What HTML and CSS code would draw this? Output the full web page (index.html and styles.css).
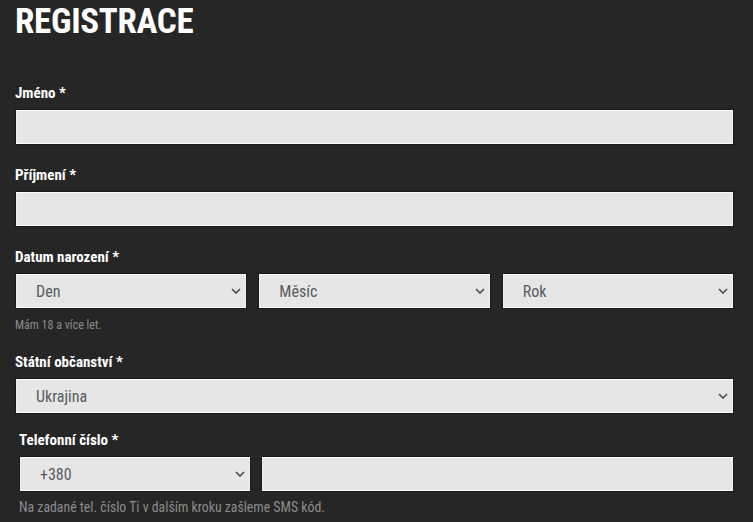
FILE: index.html
```html
<!DOCTYPE html>
<html lang="cs">
<head>
<meta charset="utf-8">
<title>Registrace</title>
<link rel="stylesheet" href="styles.css">
</head>
<body>
<div class="page">
  <h1 class="title">REGISTRACE</h1>

  <div class="field field-first">
    <label class="label">Jméno *</label>
    <div class="input"></div>
  </div>

  <div class="field">
    <label class="label">Příjmení *</label>
    <div class="input"></div>
  </div>

  <div class="field">
    <label class="label">Datum narození *</label>
    <div class="row3">
      <div class="select"><span>Den</span><svg class="chev" viewBox="0 0 10 6" width="10" height="6"><path d="M1 1 L5 5 L9 1" fill="none" stroke="#4a4a4a" stroke-width="1.6"/></svg></div>
      <div class="select"><span>Měsíc</span><svg class="chev" viewBox="0 0 10 6" width="10" height="6"><path d="M1 1 L5 5 L9 1" fill="none" stroke="#4a4a4a" stroke-width="1.6"/></svg></div>
      <div class="select"><span>Rok</span><svg class="chev" viewBox="0 0 10 6" width="10" height="6"><path d="M1 1 L5 5 L9 1" fill="none" stroke="#4a4a4a" stroke-width="1.6"/></svg></div>
    </div>
    <p class="hint">Mám 18 a více let.</p>
  </div>

  <div class="field">
    <label class="label">Státní občanství *</label>
    <div class="select"><span>Ukrajina</span><svg class="chev" viewBox="0 0 10 6" width="10" height="6"><path d="M1 1 L5 5 L9 1" fill="none" stroke="#4a4a4a" stroke-width="1.6"/></svg></div>
  </div>

  <div class="field field-phone">
    <label class="label">Telefonní číslo *</label>
    <div class="phone-row">
      <div class="select"><span>+380</span><svg class="chev" viewBox="0 0 10 6" width="10" height="6"><path d="M1 1 L5 5 L9 1" fill="none" stroke="#4a4a4a" stroke-width="1.6"/></svg></div>
      <div class="input"></div>
    </div>
    <p class="hint hint-phone">Na zadané tel. číslo Ti v dalším kroku zašleme SMS kód.</p>
  </div>
</div>
</body>
</html>
```
FILE: styles.css
```css
html, body {
  margin: 0;
  padding: 0;
  background: #262626;
}
body {
  font-family: "Roboto Condensed", "Liberation Sans Narrow", "Roboto", sans-serif;
  color: #fff;
}
.page {
  padding: 0 19px 0 15px;
  width: 719px;
}
.title {
  margin: 0;
  padding-top: 3px;
  font-size: 35px;
  line-height: 38px;
  font-weight: 700;
  letter-spacing: -0.3px;
}
.field {
  display: flex;
  flex-direction: column;
}
.field-first {
  margin-top: 43px;
}
.field + .field {
  margin-top: 21px;
}
.label {
  font-size: 15px;
  font-weight: 700;
  line-height: 18px;
  margin-bottom: 7px;
}
.input, .select {
  box-sizing: border-box;
  height: 36px;
  background: #e6e6e6;
  border: 1px solid #1a1a1a;
  box-shadow: inset 0 1px 0 #fbfbfb, inset 0 -1px 0 #fbfbfb, inset 1px 0 0 #f0f0f0, inset -1px 0 0 #f0f0f0;
}
.select {
  display: flex;
  align-items: center;
  justify-content: space-between;
  padding: 0 5px 0 20px;
  color: #585c62;
  font-size: 16px;
}
.chev {
  display: block;
}
.row3 {
  display: grid;
  grid-template-columns: 1fr 1fr 1fr;
  gap: 11px;
}
.hint {
  margin: 9px 0 0;
  font-size: 12px;
  line-height: 14px;
  color: #8c8c8c;
}
.field-phone {
  padding-left: 4px;
  margin-top: 17px !important;
}
.phone-row {
  display: grid;
  grid-template-columns: 232px 1fr;
  gap: 10px;
}
.hint-phone {
  margin-top: 7px;
  font-size: 13.8px;
  line-height: 16px;
}
```
